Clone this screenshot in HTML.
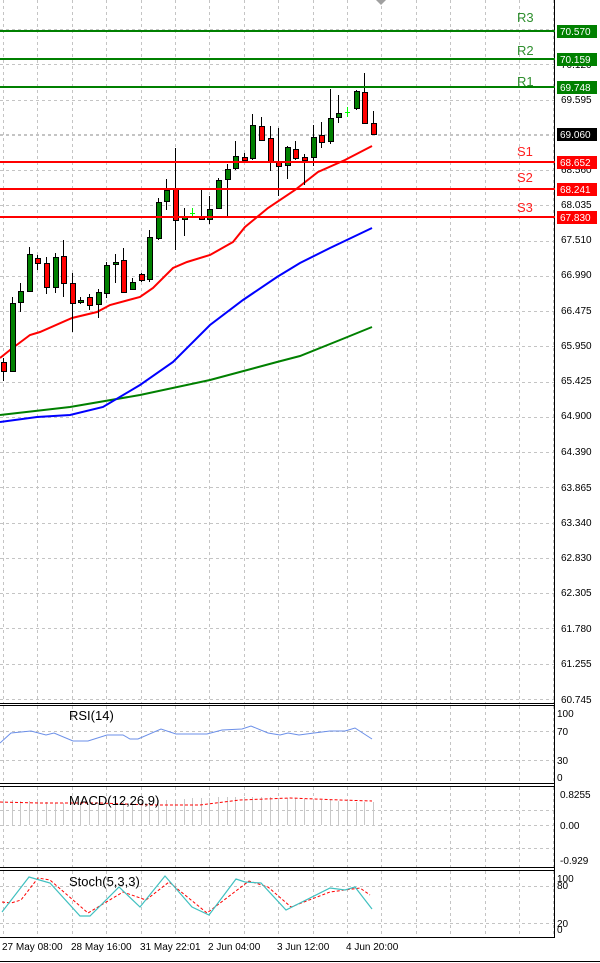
<!DOCTYPE html>
<html><head><meta charset="utf-8"><style>
html,body{margin:0;padding:0;background:#fff;width:600px;height:963px;overflow:hidden}
svg{display:block;font-family:"Liberation Sans",sans-serif}
text{font-size:10px}
</style></head><body>
<svg id="s" width="600" height="963" xmlns="http://www.w3.org/2000/svg">
<g id="grid" stroke="#c4c4c4" stroke-dasharray="3,3" stroke-width="1"></g>
<g id="draw"></g>
<g stroke="#000" fill="none" stroke-width="1">
<line x1="554.5" y1="0" x2="554.5" y2="938"/>
<line x1="0" y1="703.5" x2="555" y2="703.5"/>
<line x1="0" y1="705.5" x2="555" y2="705.5"/>
<line x1="0" y1="783.5" x2="555" y2="783.5"/>
<line x1="0" y1="786.5" x2="555" y2="786.5"/>
<line x1="0" y1="867.5" x2="555" y2="867.5"/>
<line x1="0" y1="870.5" x2="555" y2="870.5"/>
<line x1="0" y1="937.5" x2="555" y2="937.5"/>
<line x1="0" y1="961.5" x2="600" y2="961.5"/>
</g>
<polygon points="376,0 386,0 381,5" fill="#a0a0a0"/>
<g fill="#000">
<text x="561" y="33">70.510</text>
<text x="561" y="68">70.120</text>
<text x="561" y="103">69.595</text>
<text x="561" y="173">68.560</text>
<text x="561" y="208">68.035</text>
<text x="561" y="243">67.510</text>
<text x="561" y="278">66.990</text>
<text x="561" y="314">66.475</text>
<text x="561" y="349">65.950</text>
<text x="561" y="384">65.425</text>
<text x="561" y="419">64.900</text>
<text x="561" y="455">64.390</text>
<text x="561" y="491">63.865</text>
<text x="561" y="526">63.340</text>
<text x="561" y="561">62.830</text>
<text x="561" y="596">62.305</text>
<text x="561" y="632">61.780</text>
<text x="561" y="667">61.255</text>
<text x="561" y="703">60.745</text>
<text x="557" y="717">100</text>
<text x="557" y="735">70</text>
<text x="557" y="764">30</text>
<text x="557" y="781">0</text>
<text x="560" y="798">0.8255</text>
<text x="560" y="829">0.00</text>
<text x="560" y="864">-0.929</text>
<text x="557" y="882">100</text>
<text x="557" y="889">80</text>
<text x="557" y="927">20</text>
<text x="557" y="933">0</text>
<text x="2" y="950">27 May 08:00</text>
<text x="71" y="950">28 May 16:00</text>
<text x="140" y="950">31 May 22:01</text>
<text x="208" y="950">2 Jun 04:00</text>
<text x="277" y="950">3 Jun 12:00</text>
<text x="346" y="950">4 Jun 20:00</text>
</g>
<text x="69" y="720" style="font-size:13px">RSI(14)</text>
<text x="69" y="805" style="font-size:13px">MACD(12,26,9)</text>
<text x="69" y="886" style="font-size:13px">Stoch(5,3,3)</text>
<g stroke-width="2">
<line x1="0" y1="31" x2="555" y2="31" stroke="#008000"/>
<line x1="0" y1="59" x2="555" y2="59" stroke="#008000"/>
<line x1="0" y1="87" x2="555" y2="87" stroke="#008000"/>
<line x1="0" y1="162" x2="555" y2="162" stroke="#ff0000"/>
<line x1="0" y1="189" x2="555" y2="189" stroke="#ff0000"/>
<line x1="0" y1="217" x2="555" y2="217" stroke="#ff0000"/>
</g>
<text x="517" y="22" fill="#2f8f2f" style="font-size:13px">R3</text>
<text x="517" y="55" fill="#2f8f2f" style="font-size:13px">R2</text>
<text x="517" y="86" fill="#2f8f2f" style="font-size:13px">R1</text>
<text x="517" y="156" fill="#ff2020" style="font-size:13px">S1</text>
<text x="517" y="182" fill="#ff2020" style="font-size:13px">S2</text>
<text x="517" y="212" fill="#ff2020" style="font-size:13px">S3</text>
<rect x="557" y="25" width="40" height="13" fill="#008000"/>
<rect x="557" y="53" width="40" height="13" fill="#008000"/>
<rect x="557" y="81" width="40" height="13" fill="#008000"/>
<rect x="557" y="128" width="40" height="13" fill="#000"/>
<rect x="557" y="156" width="40" height="13" fill="#ff0000"/>
<rect x="557" y="183" width="40" height="13" fill="#ff0000"/>
<rect x="557" y="211" width="40" height="13" fill="#ff0000"/>
<g fill="#fff">
<text x="560" y="35">70.570</text>
<text x="560" y="63">70.159</text>
<text x="560" y="91">69.748</text>
<text x="560" y="138">69.060</text>
<text x="560" y="166">68.652</text>
<text x="560" y="193">68.241</text>
<text x="560" y="221">67.830</text>
</g>
</svg>
<script>
(function(){
var NS="http://www.w3.org/2000/svg";
function el(p,t,a){var e=document.createElementNS(NS,t);for(var k in a)e.setAttribute(k,a[k]);p.appendChild(e);return e;}
var g=document.getElementById('grid'),d=document.getElementById('draw');
for(var gx=3;gx<555;gx+=34.4){var xx=Math.round(gx)+.5;
 el(g,'line',{x1:xx,y1:0,x2:xx,y2:703});el(g,'line',{x1:xx,y1:706,x2:xx,y2:783});
 el(g,'line',{x1:xx,y1:787,x2:xx,y2:867});el(g,'line',{x1:xx,y1:871,x2:xx,y2:937});}
for(var gy=29;gy<700;gy+=35.25){el(g,'line',{x1:0,y1:Math.round(gy)+.5,x2:554,y2:Math.round(gy)+.5});}
[731,760,810,825,848,886,923].forEach(function(y){el(g,'line',{x1:0,y1:y+.5,x2:554,y2:y+.5});});
el(g,'line',{x1:0,y1:134.5,x2:554,y2:134.5});
for(var i=0;i<44;i++){var hx=Math.round(3+8.6*i)+.5;var ht=800+Math.round(3*Math.sin(i/6));
 el(d,'line',{x1:hx,y1:ht,x2:hx,y2:825,stroke:'#c8c8c8'});}
el(d,'polyline',{points:'0,802 40,803 100,803 150,805 200,805 240,800 290,798 340,800 372,801',fill:'none',stroke:'#ff0000','stroke-dasharray':'3,2'});
function pl(pts,c,w,da){var a={points:pts,fill:'none',stroke:c,'stroke-width':w||2};if(da)a['stroke-dasharray']=da;el(d,'polyline',a);}
pl('0,415 70,407 140,395 210,380 277,362 300,356 340,340 372,327','#008000');
pl('0,422 37,417 70,415 103,407 140,385 173,362 210,325 243,300 277,277 300,263 330,248 372,228','#0000ff');
pl('0,358 10,350 30,335 40,332 72,318 97,312 110,305 140,297 153,288 173,268 187,262 210,255 233,242 245,227 268,208 295,190 318,172 345,160 372,146','#ff0000');
var C=[[362,371,358,381,'r'],[303,371,297,371,'g'],[291,302,283,312,'g'],[254,291,247,291,'g'],[258,263,255,270,'r'],[263,287,257,294,'r'],[257,287,253,293,'g'],[256,283,240,297,'r'],[283,303,273,332,'r'],[300,302,297,304,'g'],[297,305,294,310,'r'],[292,304,289,318,'g'],[265,293,262,298,'g'],[262,264,254,283,'g'],[260,292,248,293,'r'],[282,289,278,290,'g'],[274,280,273,282,'r'],[237,279,230,282,'g'],[202,238,198,240,'g'],[190,201,179,210,'g'],[188,220,148,250,'r'],[216,219,208,236,'g'],[213,213,208,218,'l'],[216,219,188,220,'r'],[209,219,196,224,'g'],[180,208,178,208,'g'],[169,179,164,216,'g'],[156,168,141,170,'g'],[157,160,153,162,'r'],[125,158,114,160,'g'],[126,140,117,141,'r'],[138,162,126,171,'r'],[162,166,128,196,'r'],[147,165,146,179,'g'],[149,158,141,160,'r'],[157,160,154,185,'r'],[137,157,125,166,'g'],[135,142,122,148,'r'],[118,141,89,144,'g'],[113,117,95,123,'g'],[112,112,107,117,'l'],[91,108,90,110,'g'],[92,123,73,124,'r'],[123,134,111,135,'r']];
C.forEach(function(c,i){var cx=Math.round(3+8.6*i);
 if(c[4]=='l'){el(d,'line',{x1:cx+.5,y1:c[2],x2:cx+.5,y2:c[3],stroke:'#00ff00'});el(d,'line',{x1:cx-2,y1:c[0]+.5,x2:cx+3,y2:c[0]+.5,stroke:'#00ff00'});return;}
 el(d,'line',{x1:cx+.5,y1:c[2],x2:cx+.5,y2:c[3],stroke:'#000'});
 el(d,'rect',{x:cx-2+.5,y:c[0]+.5,width:5,height:Math.max(2,c[1]-c[0]),fill:c[4]=='g'?'#008000':'#ff0000',stroke:'#000'});});
pl('0,743 11,733 31,731 46,735 54,733 73,741 88,741 107,735 123,735 130,739 138,739 161,729 176,734 207,734 222,730 242,729 251,726 268,733 280,735 288,733 299,735 314,733 330,731 345,731 355,728 372,739','#6b8fe8',1);
pl('2,902 11,903 21,900 38,878 50,880 88,913 123,892 146,900 169,882 207,913 249,881 268,887 291,907 330,892 360,888 370,895','#ff0000',1,'3,2');
pl('2,912 29,877 50,883 80,916 90,916 119,887 140,907 165,876 192,907 209,915 236,879 245,882 261,883 286,910 330,888 345,890 355,887 372,909','#40c0c0',1.2);
})();
</script>
</body></html>
